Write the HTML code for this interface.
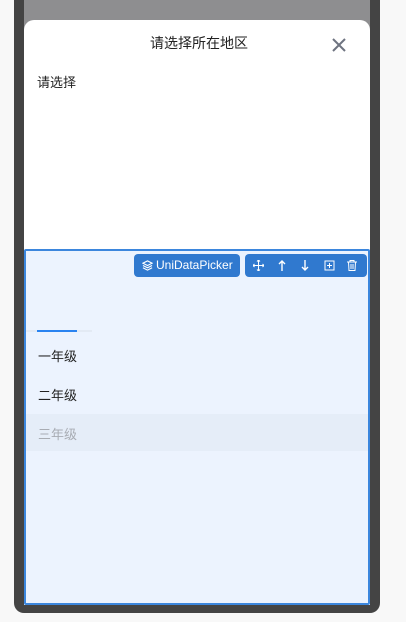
<!DOCTYPE html>
<html><head><meta charset="utf-8"><style>
*{margin:0;padding:0;box-sizing:border-box}
body{width:406px;height:622px;background:#f8f8f8;position:relative;overflow:hidden;font-family:"Liberation Sans","Noto Sans CJK SC",sans-serif}
.frame{position:absolute;left:14px;top:-10px;width:366px;height:623px;background:#444;border-radius:10px}
.screen{position:absolute;left:24px;top:0;width:346px;height:605px;background:#8e8e90}
.card{position:absolute;left:24px;top:20px;width:346px;height:585px;background:#fff;border-radius:10px 10px 0 0}
.title{position:absolute;left:2px;width:346px;top:13px;text-align:center;font-size:14px;color:#222}
.x{position:absolute;left:308px;top:18px}
.sel{position:absolute;left:13px;top:52px;font-size:13px;color:#222}
.area{position:absolute;left:24px;top:249px;width:346px;height:356px;background:#ecf3fe;border:2px solid #3b86dd;border-radius:2px}
.tag{position:absolute;top:3px;height:23px;background:#3079cf;border-radius:4px;color:#fff;font-size:12px}
.item{position:absolute;left:12px;font-size:13px;color:#222}
</style></head><body>
<div class="frame"></div>
<div class="screen"></div>
<div class="card">
<div class="title">请选择所在地区</div>
<svg class="x" width="14" height="14" viewBox="0 0 14 14"><path d="M1 1L13 13M13 1L1 13" stroke="#6e7380" stroke-width="2"/></svg>
<div class="sel">请选择</div>
</div>
<div class="area">
<div class="tag" style="left:108px;width:106px"><svg style="position:absolute;left:8px;top:6px" width="11" height="11" viewBox="0 0 12 12" fill="none" stroke="#fff" stroke-width="1.2"><path d="M6 1L11 3.5 6 6 1 3.5Z M1 6L6 8.5 11 6 M1 8.5L6 11 11 8.5"/></svg><span style="position:absolute;left:22px;top:4px">UniDataPicker</span></div>
<div class="tag" style="left:219px;width:122px;color:#fff;font-size:13px">
<svg style="position:absolute;left:8px;top:6px" width="11" height="11" viewBox="0 0 11 11" fill="none" stroke="#fff"><path d="M5.5 0v11M0 5.5h11M4 1.5l1.5-1.5 1.5 1.5M4 9.5l1.5 1.5 1.5-1.5M1.5 4L0 5.5 1.5 7M9.5 4L11 5.5 9.5 7"/></svg>
<svg style="position:absolute;left:33px;top:6px" width="8" height="11" viewBox="0 0 8 11" fill="none" stroke="#fff" stroke-width="1.4"><path d="M4 11V1M1 4l3-3 3 3"/></svg>
<svg style="position:absolute;left:56px;top:6px" width="8" height="11" viewBox="0 0 8 11" fill="none" stroke="#fff" stroke-width="1.4"><path d="M4 0v10M1 7l3 3 3-3"/></svg>
<svg style="position:absolute;left:79px;top:6px" width="11" height="11" viewBox="0 0 11 11" fill="none" stroke="#fff"><rect x="1" y="1" width="9" height="9"/><path d="M5.5 3v5M3 5.5h5"/></svg>
<svg style="position:absolute;left:102px;top:6px" width="10" height="11" viewBox="0 0 10 11" fill="none" stroke="#fff"><path d="M0 2h10M3 2V.5h4V2M1.5 2l.5 8.5h6l.5-8.5M4 4v5M6 4v5"/></svg>
</div>
<div style="position:absolute;left:0;top:79px;width:66px;height:2px;background:#e3eaf4"></div>
<div style="position:absolute;left:11px;top:79px;width:40px;height:2px;background:#2a83f0"></div>
<div class="item" style="top:95px">一年级</div>
<div class="item" style="top:134px">二年级</div>
<div style="position:absolute;left:0;top:163px;width:342px;height:37px;background:#e5edf8"></div>
<div class="item" style="top:173px;color:#a8acb3">三年级</div>
</div>
</body></html>
